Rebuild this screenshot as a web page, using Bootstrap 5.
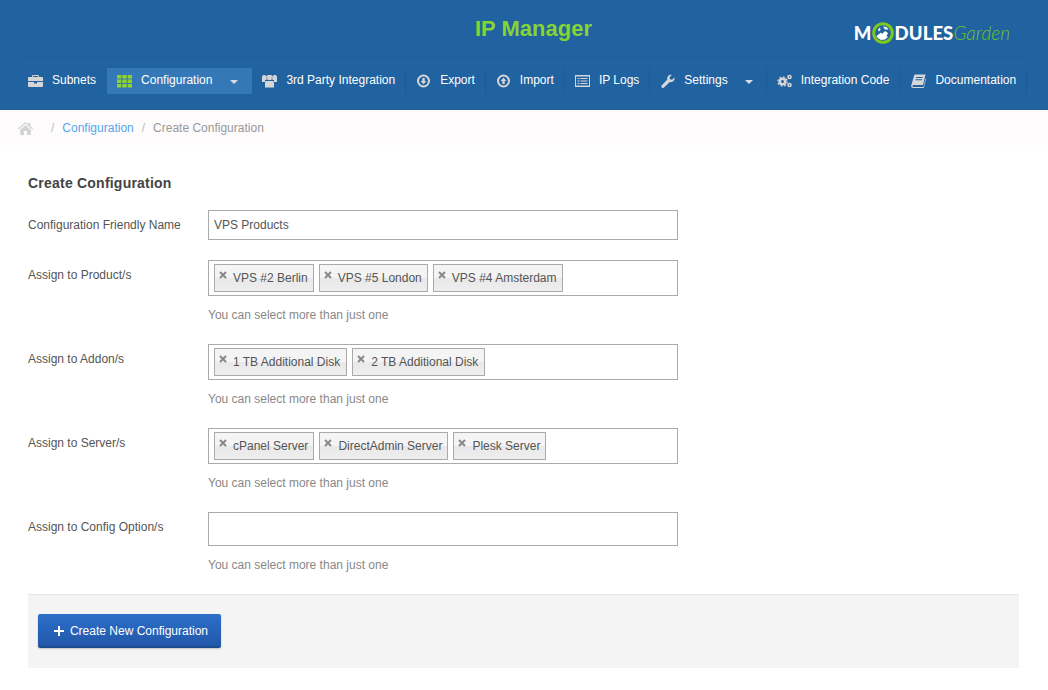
<!DOCTYPE html>
<html lang="en">
<head>
<meta charset="utf-8">
<title>IP Manager</title>
<link rel="stylesheet" href="https://cdn.jsdelivr.net/npm/bootstrap@5.3.0/dist/css/bootstrap.min.css">
<style>
body{font-family:"Liberation Sans",Arial,sans-serif;font-size:12px;color:#555;background:#fff}
.top-head{background:#2162a1;height:110px;padding:0 20px 0 18px}
.brand-row{height:58px;border-bottom:1px solid #1f5c98}
.app-title{font-size:22px;font-weight:700;color:#84d434;line-height:26px;margin:16px 0 0 457px}
.mg-logo{margin-right:18px;margin-top:21px;height:24px;line-height:24px}
.mg-bold{font-family:Lato,"Open Sans",sans-serif;font-weight:900;font-size:18.5px;color:#fff;letter-spacing:.1px}
.mg-thin{font-family:Lato,"Open Sans",sans-serif;font-weight:300;font-style:italic;font-size:19px;color:#6cc51c}
.mg-ring{margin:0 1px 0 0}
.menu-row{margin-top:10px;height:26px}
.menu-link{height:26px;padding:0 10px;border-right:1px solid #1f5a94;color:#fff;text-decoration:none;line-height:25px;white-space:nowrap}
.menu-link:hover{color:#fff}
.menu-link.plain{border-right-color:transparent}
.menu-link.on{background:#3578b8;border-right-color:transparent}
.menu-link.wide-end{padding-right:11px}
.menu-ico{width:15px;height:14px;margin-right:9px;flex:none;margin-top:6px}
.menu-caret{width:0;height:0;border:4px solid transparent;border-top-color:#d8dde3;border-bottom:0;margin:2px 3px 0 18px}
.menu-link.alt-caret .menu-caret{margin-left:17px}
.crumbs{height:35px;background:#fdfbfc;padding:0 18px;margin:0;--bs-breadcrumb-margin-bottom:0;--bs-breadcrumb-item-padding-x:8px;--bs-breadcrumb-divider-color:#bbb;--bs-breadcrumb-item-active-color:#999;font-size:12px}
.crumbs a{color:#5aa5ec;text-decoration:none}
.crumbs .breadcrumb-item{line-height:36px}
.crumb-home{margin-right:10px}
.crumb-home svg{width:15px;height:13px;vertical-align:-3px}
.sheet{padding:29px 29px 0 28px}
.sheet-title{font-size:14px;font-weight:700;letter-spacing:.22px;color:#444;line-height:18px;margin:0 0 18px}
.field{display:flex;margin-bottom:20px}
.field-label{width:180px;flex:none;padding-top:6px;line-height:18px;margin:0;color:#555}
.field-body{width:470px}
.name-input.form-control{height:30px;font-size:12px;color:#555;border:1px solid #aaa;border-radius:0;padding:0 5px;min-height:0;box-shadow:none}
.tag-box{border:1px solid #aaa;height:36px;padding:3px 5px;display:flex;gap:5px;background:#fff}
.tag-box.blank{height:34px}
.tag-pill{height:28px;border:1px solid #aaa;background:linear-gradient(#f4f4f4 50%,#e8e8e8 50%,#eeeeee);padding:0 5px;display:flex;line-height:26px;color:#555;white-space:nowrap}
.tag-pill.roomy{padding-right:6px}
.tag-x{width:8px;margin:6px 6px 0 -1px;flex:none;height:8px}
.field-hint{color:#888;line-height:18px;margin-top:10px}
.form-foot{background:#f4f4f4;border-top:1px solid #e5e5e5;height:74px;padding:19px 10px}
.go-btn.btn{height:34px;width:183px;font-size:12px;color:#fff;background:linear-gradient(#2c6fcb,#2258a8);border:0;border-bottom:2px solid #1c4b8f;border-radius:2px;padding:1px 0 0 3px;display:flex;align-items:center;justify-content:center;box-shadow:0 1px 2px rgba(0,0,0,.2)}
.go-btn svg{width:10px;height:10px;margin-right:6px}
</style>
</head>
<body>
<header class="top-head">
  <div class="brand-row d-flex justify-content-between align-items-start">
    <div class="app-title">IP Manager</div>
    <div class="mg-logo d-flex align-items-center">
      <span class="mg-bold">M</span>
      <svg class="mg-ring" width="22" height="22" viewBox="0 0 22 22"><circle cx="11" cy="11" r="8" fill="#2162a1"/><path fill="#fff" d="M4.500 14l4.500-3.500 1 1.500 3-3 3 2-1.500 3 1.500 1-3 2.500-4 .5-3-2zM11 4.500l3.500 .5 2 2.500-3.500 0zM6 7.500l2-2 .5 2.500-2 1.500z"/><circle cx="11" cy="11" r="9.300" fill="none" stroke="#7cc81e" stroke-width="3"/></svg>
      <span class="mg-bold">DULES</span><span class="mg-thin">Garden</span>
    </div>
  </div>
  <nav class="menu-row d-flex">
    <a class="menu-link plain d-flex" href="#"><svg class="menu-ico" viewBox="0 0 15 14"><path fill="#d6d6d6" d="M5 1h5q1 0 1 1v1h3q1 0 1 1v3H0V4q0-1 1-1h3V2q0-1 1-1zm0 1v1h5V2zM0 8h6v1.500h3V8h6v4q0 1-1 1H1q-1 0-1-1z"/></svg>Subnets</a>
    <a class="menu-link on d-flex" href="#"><svg class="menu-ico" viewBox="0 0 15 14"><path fill="#8ed22f" d="M0 1h4.300v3.500H0zM5.300 1h4.400v3.500H5.300zM10.700 1H15v3.500h-4.300zM0 5.500h4.300V9H0zM5.300 5.500h4.400V9H5.300zM10.700 5.500H15V9h-4.300zM0 10h4.300v3.500H0zM5.300 10h4.400v3.500H5.300zM10.700 10H15v3.500h-4.300z"/></svg>Configuration<span class="menu-caret align-self-center"></span></a>
    <a class="menu-link d-flex" href="#"><svg class="menu-ico" viewBox="0 0 15 14"><path fill="#d6d6d6" d="M1 1h2.500v1.500L5 1.500 4.500 6H3v2H0V3zM14 1h-2.500v1.500L10 1.500 10.500 6H12v2h3V3zM5.500 1h4l.5 1-.5 4h-4L5 2zM3.500 7H11.500l.5 2v4.500H3V9z"/></svg>3rd Party Integration</a>
    <a class="menu-link d-flex" href="#"><svg class="menu-ico" viewBox="0 0 15 14"><path fill="#d6d6d6" fill-rule="evenodd" d="M7.500 .5a6.500 6.500 0 1 1 0 13 6.500 6.500 0 0 1 0-13zm0 2a4.500 4.500 0 1 0 0 9 4.500 4.500 0 0 0 0-9zM6.300 4h2.400v3h1.800L7.500 10.300 4.500 7h1.800z"/></svg>Export</a>
    <a class="menu-link d-flex" href="#"><svg class="menu-ico" viewBox="0 0 15 14"><path fill="#d6d6d6" fill-rule="evenodd" d="M7.500 .5a6.500 6.500 0 1 1 0 13 6.500 6.500 0 0 1 0-13zm0 2a4.500 4.500 0 1 0 0 9 4.500 4.500 0 0 0 0-9zM6.300 10h2.400V7h1.800L7.500 3.700 4.500 7h1.800z"/></svg>Import</a>
    <a class="menu-link d-flex" href="#"><svg class="menu-ico" viewBox="0 0 15 14"><path fill="#d6d6d6" fill-rule="evenodd" d="M0 1h15v12H0zm1 1.500v9h13v-9zM2.500 4h2v1h-2zM5.500 4h7v1h-7zM2.500 6.500h2v1h-2zM5.500 6.500h7v1h-7zM2.500 9h2v1h-2zM5.500 9h7v1h-7z"/></svg>IP Logs</a>
    <a class="menu-link alt-caret d-flex" href="#"><svg class="menu-ico" viewBox="0 0 15 14"><path fill="#d6d6d6" d="M14.500 3.500q.5 2-1 3.500t-3.700 1L4 13.500q-1 1-2.200 0-1.100-1.200 0-2.300L7.300 5.400q-.5-2.200 1-3.700T12 .8L9.600 3.200l.4 2 2 .5z"/></svg>Settings<span class="menu-caret align-self-center"></span></a>
    <a class="menu-link wide-end d-flex" href="#"><svg class="menu-ico" viewBox="0 0 15 14"><g fill="none" stroke="#d6d6d6"><circle cx="5.500" cy="7.500" r="2.800" stroke-width="2.600"/><circle cx="5.500" cy="7.500" r="4.600" stroke-width="1.300" stroke-dasharray="1.800 1.800"/><circle cx="12.500" cy="3" r="1.500" stroke-width="1.600"/><circle cx="12.500" cy="11" r="1.500" stroke-width="1.600"/></g></svg>Integration Code</a>
    <a class="menu-link d-flex" href="#"><svg class="menu-ico" viewBox="0 0 15 14"><path fill="#d6d6d6" fill-rule="evenodd" d="M3.500 .5H14.500l-2.500 10.500H2.500q-1 0-1 1t1 1h10l2-8.500.5.500-2.200 9H2.500Q0 14 .2 11.500zM5 3v1h6.500l.3-1zM4.500 5.200v1H11l.3-1z"/></svg>Documentation</a>
  </nav>
</header>
<ol class="breadcrumb crumbs">
  <li class="breadcrumb-item crumb-home"><svg viewBox="0 0 15 13"><path fill="#d4d4d4" d="M7.500 0 10.500 2.600V1h2v3.300L15 6.500l-.8.900L7.500 1.600.8 7.400 0 6.500zM2.200 7.800 7.500 3.200l5.300 4.600V13H9V9H6v4H2.200z"/></svg></li>
  <li class="breadcrumb-item"><a href="#">Configuration</a></li>
  <li class="breadcrumb-item active">Create Configuration</li>
</ol>
<main class="sheet">
  <h1 class="sheet-title">Create Configuration</h1>
  <div class="field">
    <label class="field-label">Configuration Friendly Name</label>
    <div class="field-body"><input class="form-control name-input" type="text" value="VPS Products"></div>
  </div>
  <div class="field">
    <label class="field-label">Assign to Product/s</label>
    <div class="field-body">
      <div class="tag-box">
        <span class="tag-pill"><svg class="tag-x" viewBox="0 0 8 8"><path d="M1 1l6 6M7 1L1 7" stroke="#888" stroke-width="2"/></svg>VPS #2 Berlin</span>
        <span class="tag-pill"><svg class="tag-x" viewBox="0 0 8 8"><path d="M1 1l6 6M7 1L1 7" stroke="#888" stroke-width="2"/></svg>VPS #5 London</span>
        <span class="tag-pill"><svg class="tag-x" viewBox="0 0 8 8"><path d="M1 1l6 6M7 1L1 7" stroke="#888" stroke-width="2"/></svg>VPS #4 Amsterdam</span>
      </div>
      <div class="field-hint">You can select more than just one</div>
    </div>
  </div>
  <div class="field">
    <label class="field-label">Assign to Addon/s</label>
    <div class="field-body">
      <div class="tag-box">
        <span class="tag-pill roomy"><svg class="tag-x" viewBox="0 0 8 8"><path d="M1 1l6 6M7 1L1 7" stroke="#888" stroke-width="2"/></svg>1 TB Additional Disk</span>
        <span class="tag-pill roomy"><svg class="tag-x" viewBox="0 0 8 8"><path d="M1 1l6 6M7 1L1 7" stroke="#888" stroke-width="2"/></svg>2 TB Additional Disk</span>
      </div>
      <div class="field-hint">You can select more than just one</div>
    </div>
  </div>
  <div class="field">
    <label class="field-label">Assign to Server/s</label>
    <div class="field-body">
      <div class="tag-box">
        <span class="tag-pill"><svg class="tag-x" viewBox="0 0 8 8"><path d="M1 1l6 6M7 1L1 7" stroke="#888" stroke-width="2"/></svg>cPanel Server</span>
        <span class="tag-pill"><svg class="tag-x" viewBox="0 0 8 8"><path d="M1 1l6 6M7 1L1 7" stroke="#888" stroke-width="2"/></svg>DirectAdmin Server</span>
        <span class="tag-pill"><svg class="tag-x" viewBox="0 0 8 8"><path d="M1 1l6 6M7 1L1 7" stroke="#888" stroke-width="2"/></svg>Plesk Server</span>
      </div>
      <div class="field-hint">You can select more than just one</div>
    </div>
  </div>
  <div class="field">
    <label class="field-label">Assign to Config Option/s</label>
    <div class="field-body">
      <div class="tag-box blank"></div>
      <div class="field-hint">You can select more than just one</div>
    </div>
  </div>
  <div class="form-foot">
    <button type="button" class="btn go-btn"><svg viewBox="0 0 10 10"><path fill="#fff" d="M4 0h2v4h4v2H6v4H4V6H0V4h4z"/></svg>Create New Configuration</button>
  </div>
</main>
</body>
</html>
